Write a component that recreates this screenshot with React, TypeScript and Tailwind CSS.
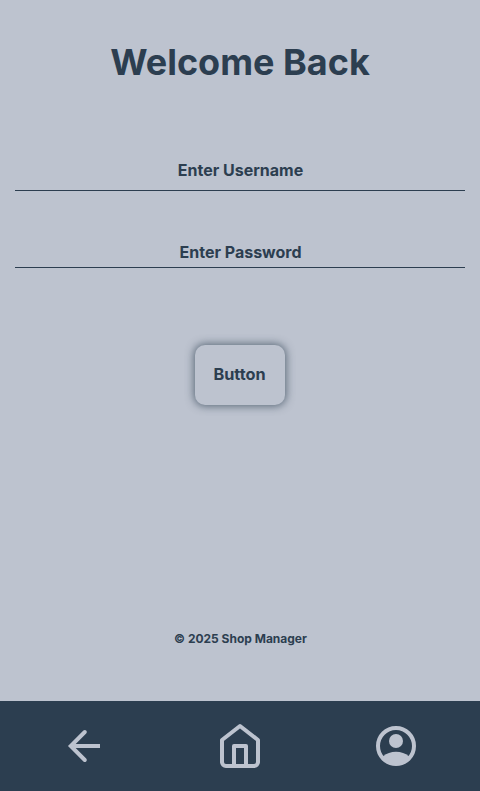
export default function App() {
  return (
    <div className="flex h-[791px] w-[480px] flex-col bg-[#bdc3cf] font-['Inter',sans-serif] font-bold text-[#2c3e50]">
      <main className="flex flex-1 flex-col px-[15px]">
        <h1 className="mt-[40px] text-center text-[36px] leading-[44px]">Welcome Back</h1>
        <div className="mt-[76px] h-[31px] border-b border-[#2c3e50] pl-px text-center text-base leading-5">Enter Username</div>
        <div className="mt-[51px] h-[26px] border-b border-[#2c3e50] pl-px text-center text-base leading-5">Enter Password</div>
        <button className="mx-auto mt-[77px] h-[60px] w-[90px] rounded-[10px] pr-px pb-[2px] text-[16.3px] shadow-[0_0_8px_1px_#2c3e50b3]">Button</button>
        <p className="mt-[226px] pl-px text-center text-xs leading-4">© 2025 Shop Manager</p>
      </main>
      <nav className="flex h-[90px] items-center justify-between bg-[#2c3e50] px-[60px] text-[#bdc3cf]">
        <svg className="size-12" viewBox="0 0 48 48" fill="none" stroke="currentColor" strokeWidth="4"><path d="M40 24H11" /><path d="M24.8 10L10.8 24L24.8 38" strokeLinecap="round" /></svg>
        <svg className="size-12" viewBox="0 0 24 24" fill="none" stroke="currentColor" strokeWidth="2" strokeLinecap="round" strokeLinejoin="round"><path d="M3 9l9-7 9 7v11a2 2 0 0 1-2 2H5a2 2 0 0 1-2-2zM9 22V12h6v10" /></svg>
        <svg className="size-12" viewBox="0 0 48 48" fill="currentColor"><circle cx="24" cy="24" r="18" fill="none" stroke="currentColor" strokeWidth="4" /><circle cx="24" cy="19" r="7" /><path d="M11.2 34.2C14.5 31.4 19 29.8 24 29.8S33.5 31.4 36.8 34.2L38 38L24 43L10 38Z" /></svg>
      </nav>
    </div>
  );
}
